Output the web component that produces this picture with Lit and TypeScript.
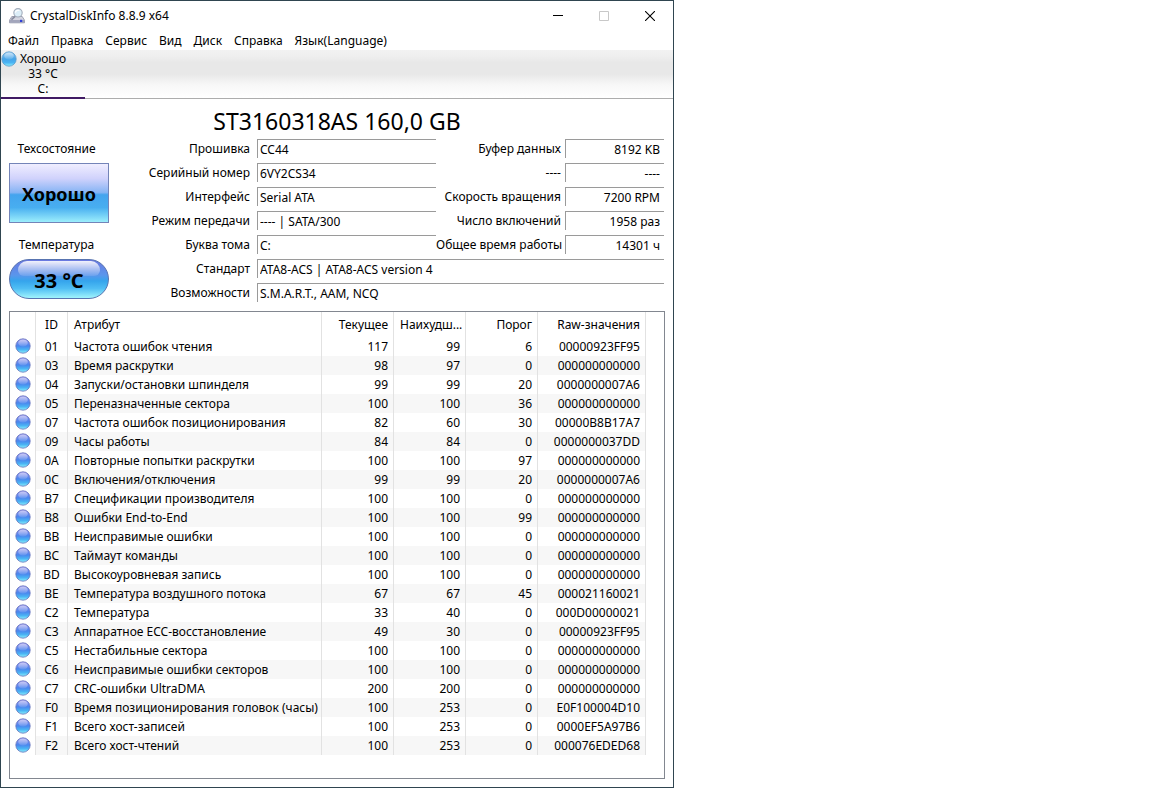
import { LitElement, html, css, svg } from "lit";
import { customElement, property } from "lit/decorators.js";

type Attribute = [string, string, string, string, string, string];

const MENU = ["Файл", "Правка", "Сервис", "Вид", "Диск", "Справка", "Язык(Language)"];

const ATTRIBUTES: Attribute[] = [
  ["01", "Частота ошибок чтения", "117", "99", "6", "00000923FF95"],
  ["03", "Время раскрутки", "98", "97", "0", "000000000000"],
  ["04", "Запуски/остановки шпинделя", "99", "99", "20", "0000000007A6"],
  ["05", "Переназначенные сектора", "100", "100", "36", "000000000000"],
  ["07", "Частота ошибок позиционирования", "82", "60", "30", "00000B8B17A7"],
  ["09", "Часы работы", "84", "84", "0", "0000000037DD"],
  ["0A", "Повторные попытки раскрутки", "100", "100", "97", "000000000000"],
  ["0C", "Включения/отключения", "99", "99", "20", "0000000007A6"],
  ["B7", "Спецификации производителя", "100", "100", "0", "000000000000"],
  ["B8", "Ошибки End-to-End", "100", "100", "99", "000000000000"],
  ["BB", "Неисправимые ошибки", "100", "100", "0", "000000000000"],
  ["BC", "Таймаут команды", "100", "100", "0", "000000000000"],
  ["BD", "Высокоуровневая запись", "100", "100", "0", "000000000000"],
  ["BE", "Температура воздушного потока", "67", "67", "45", "000021160021"],
  ["C2", "Температура", "33", "40", "0", "000D00000021"],
  ["C3", "Аппаратное ECC-восстановление", "49", "30", "0", "00000923FF95"],
  ["C5", "Нестабильные сектора", "100", "100", "0", "000000000000"],
  ["C6", "Неисправимые ошибки секторов", "100", "100", "0", "000000000000"],
  ["C7", "CRC-ошибки UltraDMA", "200", "200", "0", "000000000000"],
  ["F0", "Время позиционирования головок (часы)", "100", "253", "0", "E0F100004D10"],
  ["F1", "Всего хост-записей", "100", "253", "0", "0000EF5A97B6"],
  ["F2", "Всего хост-чтений", "100", "253", "0", "000076EDED68"],
];

const FIELDS: { id: string; label: string; value: string; kind: "main" | "side" | "wide" }[] = [
  { id: "firmware", label: "Прошивка", value: "CC44", kind: "main" },
  { id: "buffer", label: "Буфер данных", value: "8192 KB", kind: "side" },
  { id: "serial", label: "Серийный номер", value: "6VY2CS34", kind: "main" },
  { id: "cache", label: "----", value: "----", kind: "side" },
  { id: "interface", label: "Интерфейс", value: "Serial ATA", kind: "main" },
  { id: "rotation", label: "Скорость вращения", value: "7200 RPM", kind: "side" },
  { id: "transfer", label: "Режим передачи", value: "---- | SATA/300", kind: "main" },
  { id: "power-count", label: "Число включений", value: "1958 раз", kind: "side" },
  { id: "letter", label: "Буква тома", value: "C:", kind: "main" },
  { id: "hours", label: "Общее время работы", value: "14301 ч", kind: "side" },
  { id: "standard", label: "Стандарт", value: "ATA8-ACS | ATA8-ACS version 4", kind: "wide" },
  { id: "features", label: "Возможности", value: "S.M.A.R.T., AAM, NCQ", kind: "wide" },
];

@customElement("status-orb")
export class StatusOrb extends LitElement {
  @property() tone = "violet";

  static styles = css`
    :host {
      display: block;
      flex: none;
      width: 16px;
      height: 16px;
    }
    svg {
      display: block;
    }
  `;

  render() {
    const violet = this.tone === "violet";
    return html`<svg width="16" height="16" viewBox="0 0 16 16" aria-hidden="true">
      ${svg`<defs>
        <linearGradient id="body" x1="0" y1="0" x2="0" y2="1">
          <stop offset="0" stop-color=${violet ? "#9088ea" : "#8cc4f0"} />
          <stop offset="0.5" stop-color=${violet ? "#4a86ee" : "#45a4e8"} />
          <stop offset="0.75" stop-color="#4ab4f4" />
          <stop offset="1" stop-color="#8cf0fc" />
        </linearGradient>
        <linearGradient id="shine" x1="0" y1="0" x2="0" y2="1">
          <stop offset="0" stop-color="#fff" stop-opacity="0.55" />
          <stop offset="1" stop-color="#fff" stop-opacity="0.1" />
        </linearGradient>
      </defs>
      <circle cx="8" cy="8" r="7.2" fill="url(#body)" stroke=${violet ? "#6673bd" : "#5a9ccc"} stroke-width="0.8" />
      <ellipse cx="8" cy="5" rx="4.8" ry="3.4" fill="url(#shine)" />`}
    </svg>`;
  }
}

@customElement("app-root")
export class AppRoot extends LitElement {
  static styles = css`
    :host {
      display: block;
      min-height: 100vh;
      background: #fff;
      color: #000;
      font: 12px/16px "Noto Sans", "Open Sans", sans-serif;
    }
    * {
      box-sizing: border-box;
    }
    button,
    input {
      margin: 0;
      padding: 0;
      border: 0;
      background: none;
      color: inherit;
      font: inherit;
    }
    .window {
      display: flex;
      flex-direction: column;
      width: 100%;
      max-width: 674px;
      min-height: 100vh;
      border: 1px solid #2f4550;
    }
    .titlebar {
      display: flex;
      align-items: center;
      height: 30px;
      padding-left: 8px;
    }
    .caption {
      flex: 1;
      margin: 0 0 0 5px;
      font: inherit;
    }
    .app-icon,
    .glyph {
      display: block;
    }
    .control {
      display: flex;
      align-items: center;
      justify-content: center;
      width: 46px;
      height: 28px;
    }
    .menu {
      display: flex;
      gap: 12px;
      height: 19px;
      padding-left: 7px;
    }
    .menu-item {
      line-height: 20px;
      white-space: nowrap;
    }
    .drives {
      display: flex;
      height: 49px;
      border-bottom: 1px solid #adadad;
      background: linear-gradient(#f2f2f2, #efefef 12%, #e8e8e8 26%, #e8e8e8 50%, #f7f7f7 72%, #fff);
    }
    .drive {
      display: flex;
      flex-direction: column;
      align-items: center;
      width: 84px;
      height: 49px;
      padding-top: 1px;
      border-bottom: 2px solid #401a64;
      line-height: 15px;
    }
    .drive-state {
      display: flex;
      align-self: flex-start;
      gap: 3px;
      height: 15px;
    }
    .model {
      margin: 0;
      height: 40px;
      font-size: 23px;
      font-weight: 400;
      line-height: 44px;
      text-align: center;
    }
    .summary {
      display: grid;
      grid-template-columns: 100px minmax(0, 1fr);
      padding: 0 9px 0 8px;
    }
    .health {
      display: flex;
      flex-direction: column;
      align-items: stretch;
      text-align: center;
    }
    .health-label {
      height: 24px;
      padding-right: 5px;
      line-height: 20px;
    }
    .health-state {
      height: 60px;
      margin-bottom: 12px;
      padding-top: 2px;
      border: 1px solid #7484b8;
      background: linear-gradient(#f0eeff, #d0d2fc 25%, #86b4f4 49%, #44a4ee 53%, #48aef0 75%, #9ceefc);
      font-size: 18px;
      font-weight: 700;
    }
    .health-temp {
      display: grid;
      place-items: center;
      height: 40px;
      padding-top: 4px;
      border: 1px solid #5874b0;
      border-radius: 20px;
      background: linear-gradient(#6a78e0, #5a96ec 40%, #35a4ec 55%, #50bef4 75%, #a0f4fc);
      font-size: 20px;
      font-weight: 700;
    }
    .health-temp::before,
    .temp-text {
      grid-area: 1 / 1;
    }
    .health-temp::before {
      content: "";
      align-self: start;
      width: 82px;
      height: 15px;
      margin-top: -3px;
      border-radius: 12px 12px 8px 8px;
      background: linear-gradient(rgba(255, 255, 255, 0.9), rgba(255, 255, 255, 0.1));
    }
    .temp-text {
      line-height: 34px;
    }
    .fields {
      display: grid;
      grid-template-columns: 148px minmax(0, 1fr) 129px 99px;
      grid-auto-rows: 24px;
    }
    .label {
      padding-right: 7px;
      line-height: 20px;
      text-align: right;
      white-space: nowrap;
    }
    .label.side {
      padding-right: 4px;
    }
    .value {
      width: 100%;
      min-width: 0;
      height: 19px;
      padding: 1px 4px 0 2px;
      border-top: 1px solid #9a9a9a;
      border-left: 1px solid #9a9a9a;
      border-radius: 0;
      outline: none;
    }
    .value.side {
      text-align: right;
    }
    .value.wide {
      grid-column: span 3;
    }
    .panel {
      flex: 1;
      margin: 4px 8px 8px;
      padding-right: 18px;
      border: 1px solid #828790;
    }
    .attributes {
      width: 100%;
      border-spacing: 0;
      table-layout: fixed;
    }
    .attributes th,
    .attributes td {
      height: 19px;
      padding: 0 5px 0 6px;
      overflow: hidden;
      border-right: 1px solid #e2e2e2;
      font-weight: 400;
      line-height: 18px;
      text-align: right;
      white-space: nowrap;
    }
    .attributes th {
      height: 25px;
    }
    .attributes .status {
      width: 26px;
      padding: 0 0 0 5px;
    }
    .attributes td.status {
      padding-bottom: 2px;
    }
    .attributes .id {
      width: 32px;
      padding: 0;
      text-align: center;
    }
    .attributes .name {
      padding-right: 0;
      text-align: left;
    }
    .attributes .number {
      width: 72px;
    }
    .attributes .raw {
      width: 108px;
    }
    .attributes tr:nth-child(even) td:not(.status) {
      background: #f7f7f7;
    }
  `;

  private appIcon() {
    return html`<svg class="app-icon" width="16" height="16" viewBox="0 0 16 16" aria-hidden="true">
      <path d="M2.8 8.5h10.4l2.3 3.7v2.6H.5v-2.6z" fill="#d4d5e0" stroke="#8d90a4" stroke-width=".8" />
      <path d="M.8 12h14.4v2.7H.8z" fill="#a3a6bc" />
      <path d="M6.4 8.2 3 11.2" stroke="#8a8ea0" stroke-width="1.8" stroke-linecap="round" />
      <circle cx="9" cy="4.8" r="4.2" fill="#dceef8" stroke="#a2acba" stroke-width="1.1" />
      <path d="M6.4 4.6a2.7 2.7 0 0 1 4-2" stroke="#fff" stroke-width="1.2" fill="none" />
      <rect x="11" y="11.8" width="2.2" height="2.2" fill="#3040d8" />
    </svg>`;
  }

  render() {
    return html`
      <main class="window">
        <header class="titlebar">
          ${this.appIcon()}
          <h1 class="caption">CrystalDiskInfo 8.8.9 x64</h1>
          <button class="control" aria-label="Свернуть">
            <svg class="glyph" width="10" height="10" viewBox="0 0 10 10"><path d="M0 4.5h10" stroke="#000" /></svg>
          </button>
          <button class="control" aria-label="Развернуть" disabled>
            <svg class="glyph" width="10" height="10" viewBox="0 0 10 10">
              <path d="M.5.5h9v9h-9z" fill="none" stroke="#c8c8c8" />
            </svg>
          </button>
          <button class="control" aria-label="Закрыть">
            <svg class="glyph" width="10" height="10" viewBox="0 0 10 10">
              <path d="M0 0l10 10M10 0L0 10" stroke="#000" stroke-width="1.1" />
            </svg>
          </button>
        </header>
        <nav class="menu">${MENU.map((item) => html`<button class="menu-item">${item}</button>`)}</nav>
        <div class="drives">
          <button class="drive">
            <span class="drive-state"><status-orb tone="sky"></status-orb>Хорошо</span>
            <span>33 °C</span>
            <span>C:</span>
          </button>
        </div>
        <h2 class="model">ST3160318AS 160,0 GB</h2>
        <section class="summary">
          <div class="health">
            <span class="health-label">Техсостояние</span>
            <button class="health-state">Хорошо</button>
            <span class="health-label">Температура</span>
            <button class="health-temp"><span class="temp-text">33 °C</span></button>
          </div>
          <div class="fields">
            ${FIELDS.map(
              (f) => html`<label class="label ${f.kind}" for=${f.id}>${f.label}</label>
                <input class="value ${f.kind}" id=${f.id} .value=${f.value} readonly />`,
            )}
          </div>
        </section>
        <section class="panel">
          <table class="attributes">
            <thead>
              <tr>
                <th class="status"></th>
                <th class="id">ID</th>
                <th class="name">Атрибут</th>
                <th class="number">Текущее</th>
                <th class="number">Наихудш...</th>
                <th class="number">Порог</th>
                <th class="raw">Raw-значения</th>
              </tr>
            </thead>
            <tbody>
              ${ATTRIBUTES.map(
                ([id, name, current, worst, threshold, raw]) => html`<tr>
                  <td class="status"><status-orb></status-orb></td>
                  <td class="id">${id}</td>
                  <td class="name">${name}</td>
                  <td class="number">${current}</td>
                  <td class="number">${worst}</td>
                  <td class="number">${threshold}</td>
                  <td class="raw">${raw}</td>
                </tr>`,
              )}
            </tbody>
          </table>
        </section>
      </main>
    `;
  }
}
